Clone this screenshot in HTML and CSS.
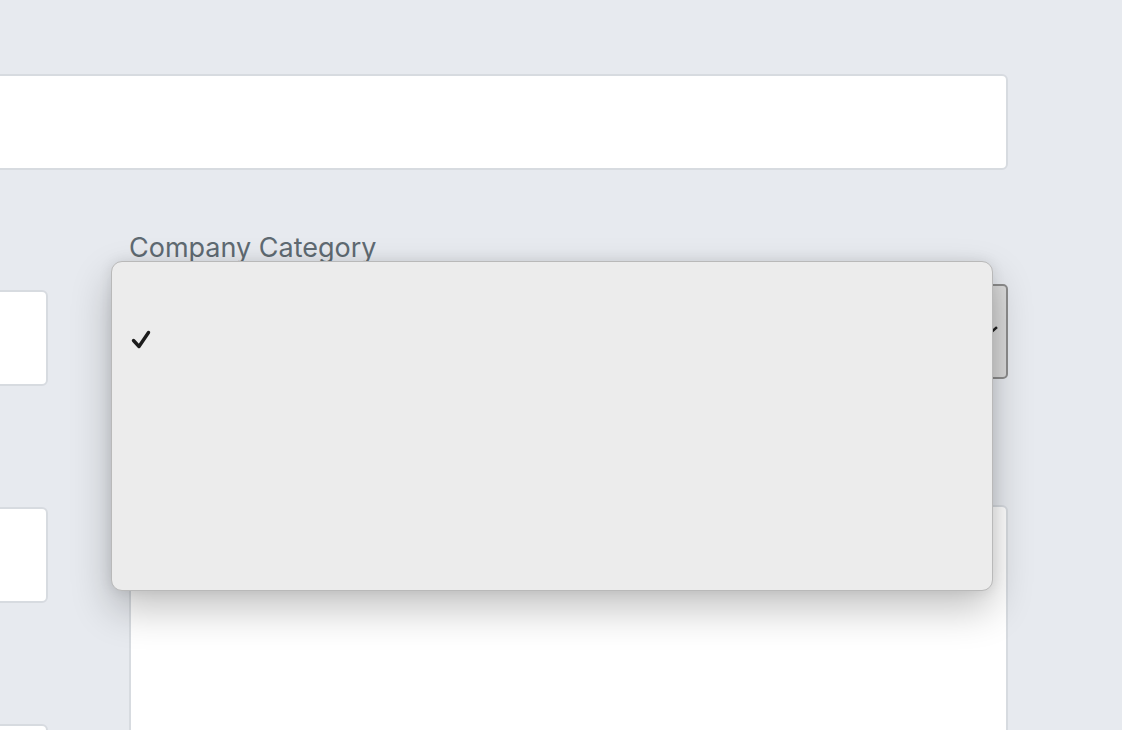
FILE: index.html
```html
<!DOCTYPE html>
<html lang="en">
<head>
<meta charset="utf-8">
<title>Company form</title>
<link rel="stylesheet" href="styles.css">
</head>
<body>
<div class="page">
  <div class="top-field"></div>
  <div class="grid">
    <div class="col col-left">
      <div class="input"></div>
      <div class="input"></div>
      <div class="input"></div>
    </div>
    <div class="col col-right">
      <label class="label">Company Category</label>
      <div class="select">
        <svg class="chev" width="20" height="12" viewBox="0 0 20 12"><polyline points="2,2 10,9 18,2" fill="none" stroke="#222" stroke-width="2.6" stroke-linecap="square"/></svg>
      </div>
      <label class="label label-2">Description</label>
      <div class="textarea"></div>
    </div>
  </div>
</div>
<div class="popup">
  <div class="option">
    <svg class="check" width="20" height="20" viewBox="0 0 20 20"><polyline points="2.5,10.5 8,16.5 17.5,2.5" fill="none" stroke="#1c1c1c" stroke-width="3.4" stroke-linecap="round" stroke-linejoin="round"/></svg>
  </div>
</div>
</body>
</html>
```
FILE: styles.css
```css
* { box-sizing: border-box; }
html, body { margin: 0; padding: 0; }
body {
  background: #e7eaef;
  font-family: Inter, "Open Sans", sans-serif;
  width: 1122px;
  height: 730px;
  overflow: hidden;
  position: relative;
}
.page {
  margin-left: -830px;
  width: 1838px;
  padding-top: 74px;
}
.top-field {
  height: 96px;
  background: #fff;
  border: 2px solid #d7dbe0;
  border-radius: 6px;
}
.grid {
  display: grid;
  grid-template-columns: 878px 879px;
  column-gap: 81px;
  margin-top: 45px;
}
.col-left { padding-top: 75px; display: flex; flex-direction: column; gap: 121px; }
.input {
  height: 96px;
  background: #fff;
  border: 2px solid #d7dbe0;
  border-radius: 6px;
}
.col-right { display: flex; flex-direction: column; }
.label {
  margin-top: 18px;
  font-size: 27px;
  line-height: 30px;
  color: #5f6a72;
}
.select {
  margin-top: 21px;
  height: 95px;
  background: #dadada;
  border: 2px solid #8d8d8d;
  border-radius: 5px;
  position: relative;
}
.chev { position: absolute; right: 8px; top: 40px; }
.label-2 { margin-top: 78px; visibility: hidden; }
.textarea {
  margin-top: 18px;
  height: 400px;
  background: #fff;
  border: 2px solid #d7dbe0;
  border-radius: 6px;
}
.popup {
  position: absolute;
  left: 111px;
  top: 261px;
  width: 882px;
  height: 330px;
  background: #ececec;
  border: 1px solid #b9b9b9;
  border-radius: 11px;
  box-shadow: 0 18px 40px rgba(0,0,0,0.24), 0 0 14px rgba(0,0,0,0.09);
  padding-top: 68px;
}
.option { padding-left: 19px; height: 20px; display: flex; align-items: center; }
.check { display: block; }
```
